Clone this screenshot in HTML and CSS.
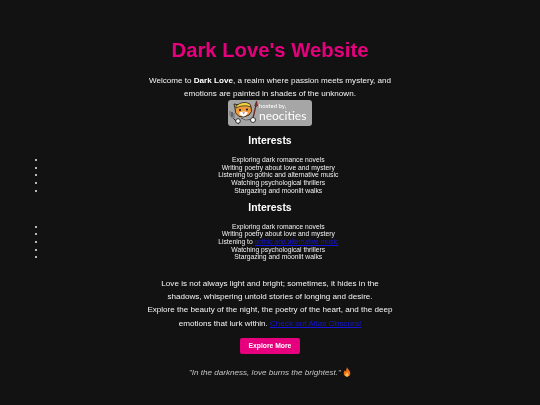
FILE: index.html
```html
<!DOCTYPE html>
<html lang="en">
<head>
<meta charset="utf-8">
<title>Dark Love's Website</title>
<link rel="stylesheet" href="styles.css">
</head>
<body>
<main class="page">
  <h1 class="title">Dark Love's Website</h1>
  <p class="copy intro">Welcome to <strong>Dark Love</strong>, a realm where passion meets mystery, and<br>emotions are painted in shades of the unknown.</p>
  <a class="badge" href="#">
    <svg class="mascot" viewBox="0 0 31 26" width="31" height="26" aria-hidden="true">
      <path d="M2 11 L2 15 Q3 18 6 18 L6 13 M4 12 L4 17 M4 17 L11 24" stroke="#222" stroke-width="1" fill="none"/>
      <path d="M2 11 L2 15 Q3 18 6 18 L6 13" stroke="#eee" stroke-width=".5" fill="none"/>
      <circle cx="10" cy="21" r="2.300" fill="#fff" stroke="#222" stroke-width=".9"/>
      <path d="M7 8 L6 4 L11 5 Q16 2 21 4 L23 7 Q25 12 21 15 Q16 18 11 16.500 Q6 13 7 8Z" fill="#ee9a3a" stroke="#222" stroke-width=".9"/>
      <path d="M8 6 Q15 0 22 4 L23 7 Q16 4 8 8Z" fill="#f2d23c" stroke="#222" stroke-width=".7"/>
      <path d="M11 13 Q15 10.500 20 12.500 Q18 16.500 15 16.500 Q12 16 11 13Z" fill="#fff"/>
      <circle cx="12" cy="10" r="1.100" fill="#222"/>
      <circle cx="19" cy="9.500" r="1.100" fill="#222"/>
      <path d="M14.500 12.500 L17 12.500 L15.700 14Z" fill="#c33"/>
      <path d="M25 18 L28 5" stroke="#6a2a20" stroke-width="1.300"/>
      <path d="M26.800 6 L28.500 1 L29.500 6Z" fill="#a03030" stroke="#5a1a1a" stroke-width=".7"/>
      <circle cx="25" cy="20" r="2.500" fill="#fff" stroke="#222" stroke-width=".9"/>
      <path d="M13 18 Q18 21 22 19.500" stroke="#222" fill="#eee" stroke-width=".7"/>
    </svg>
    <span class="badge-text"><span class="hosted">hosted by,</span><span class="brand">neocities</span></span>
  </a>

  <section class="interests">
    <h2 class="heading">Interests</h2>
    <ul class="list">
      <li>Exploring dark romance novels</li>
      <li>Writing poetry about love and mystery</li>
      <li>Listening to gothic and alternative music</li>
      <li>Watching psychological thrillers</li>
      <li>Stargazing and moonlit walks</li>
    </ul>
  </section>
  <section class="interests">
    <h2 class="heading">Interests</h2>
    <ul class="list">
      <li>Exploring dark romance novels</li>
      <li>Writing poetry about love and mystery</li>
      <li>Listening to <a href="#">gothic and alternative music</a></li>
      <li>Watching psychological thrillers</li>
      <li>Stargazing and moonlit walks</li>
    </ul>
  </section>

  <p class="copy outro">Love is not always light and bright; sometimes, it hides in the<br>shadows, whispering untold stories of longing and desire.<br>Explore the beauty of the night, the poetry of the heart, and the deep<br>emotions that lurk within. <a href="#">Check out Atlas Obscura!</a></p>
  <a class="button" href="#">Explore More</a>
  <p class="quote">"In the darkness, love burns the brightest." <svg class="flame" viewBox="0 0 12 14" width="8" height="10" aria-hidden="true"><path d="M6 0 C7 3 11 5 11 9 C11 12 9 14 6 14 C3 14 1 12 1 9 C1 7 2 6 3 4 C3.500 5.500 4 6 4.500 6 C5 4 5 2 6 0Z" fill="#f0701e"/><path d="M6 7 C7 9 8.500 10 8.500 11.500 C8.500 13 7 14 6 14 C5 14 3.500 13 3.500 11.500 C3.500 10 5.500 9 6 7Z" fill="#fbc04a"/></svg></p>
  <footer class="footer">© 2025 Dark Love. All Rights Reserved.</footer>
</main>
</body>
</html>
```

FILE: styles.css
```css
html, body {
  margin: 0;
  padding: 0;
  height: 405px;
  overflow: hidden;
  background: #121212;
}
.page {
  padding: 37.500px 0 0;
  display: flex;
  flex-direction: column;
  align-items: center;
  font-family: "Liberation Sans", Arial, sans-serif;
  color: #f4f4f4;
  text-align: center;
  filter: blur(.25px);
}
.title {
  margin: 0;
  font-size: 20.250px;
  line-height: 25px;
  font-weight: 700;
  color: #e6007e;
}
.copy {
  margin: 0;
  font-size: 8.100px;
  line-height: 13.200px;
}
.copy strong { color: #fff; }
.copy a, .list a { color: #1414dc; }
.intro { margin-top: 11px; }
.badge {
  width: 84px;
  height: 26px;
  box-sizing: border-box;
  border-radius: 3px;
  background: #a6a6a6;
  display: flex;
  align-items: center;
  text-decoration: none;
  overflow: hidden;
}
.mascot { flex: none; }
.badge-text {
  display: flex;
  flex-direction: column;
  gap: 1px;
  align-items: flex-start;
  color: #fff;
  line-height: 1;
}
.hosted { font-size: 6px; font-family: "Lato", sans-serif; }
.brand { font-size: 12px; font-family: "Lato", sans-serif; }
.interests { align-self: stretch; margin-top: 8px; }
.interests + .interests { margin-top: 6.500px; }
.heading {
  margin: 0;
  font-size: 10.400px;
  line-height: 14px;
  font-weight: 700;
  color: #fff;
}
.list {
  margin: 8px 0 0;
  padding: 0 29px 0 45.500px;
  font-size: 6.750px;
  line-height: 7.650px;
  color: #f0f0f0;
}
.list li::marker { font-size: 8px; }
.outro { margin-top: 16px; }
.button {
  margin-top: 8.500px;
  width: 60px;
  height: 16px;
  border-radius: 2px;
  background: #e6007e;
  color: #fff;
  font-size: 6.750px;
  font-weight: 700;
  line-height: 16px;
  text-decoration: none;
}
.quote {
  margin: 12px 0 0;
  font-size: 8.100px;
  line-height: 13px;
  font-style: italic;
  color: #c4c4c4;
}
.flame { vertical-align: -2px; }
.footer {
  margin-top: 27px;
  font-size: 8.100px;
  line-height: 10px;
  color: #777;
}
```
